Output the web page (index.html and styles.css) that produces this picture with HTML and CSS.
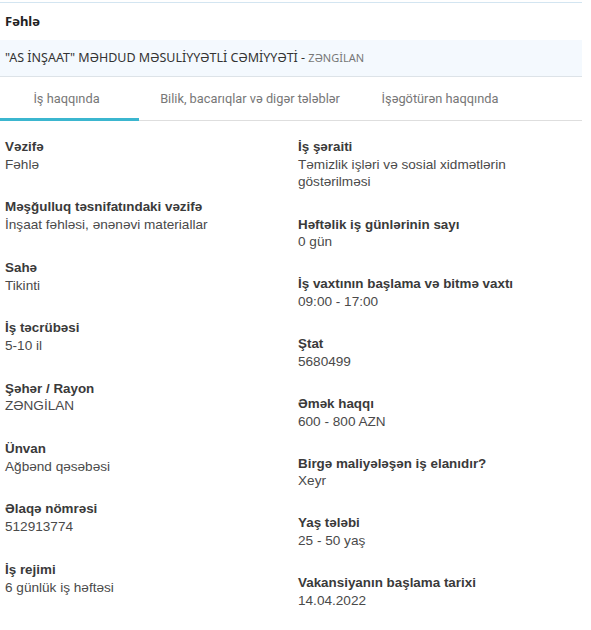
FILE: index.html
```html
<!DOCTYPE html>
<html lang="az">
<head>
    <meta charset="UTF-8">
    <title>Fəhlə</title>
    <link rel="stylesheet" href="styles.css">
</head>
<body>

<div class="vacancy">
    <div class="vacancy-title">Fəhlə</div>
    <div class="company">"AS İNŞAAT" MƏHDUD MƏSULİYYƏTLİ CƏMİYYƏTİ - <span class="company-city">ZƏNGİLAN</span></div>

    <div class="tabs">
        <a class="tab tab-about active">İş haqqında</a>
        <a class="tab tab-skills">Bilik, bacarıqlar və digər tələblər</a>
        <a class="tab tab-employer">İşəgötürən haqqında</a>
    </div>

    <div class="details">
        <div class="column">
            <div class="item">
                <p class="label">Vəzifə</p>
                <p class="value">Fəhlə</p>
            </div>
            <div class="item">
                <p class="label">Məşğulluq təsnifatındaki vəzifə</p>
                <p class="value">İnşaat fəhləsi, ənənəvi materiallar</p>
            </div>
            <div class="item">
                <p class="label">Sahə</p>
                <p class="value">Tikinti</p>
            </div>
            <div class="item">
                <p class="label">İş təcrübəsi</p>
                <p class="value">5-10 il</p>
            </div>
            <div class="item">
                <p class="label">Şəhər / Rayon</p>
                <p class="value">ZƏNGİLAN</p>
            </div>
            <div class="item">
                <p class="label">Ünvan</p>
                <p class="value">Ağbənd qəsəbəsi</p>
            </div>
            <div class="item">
                <p class="label">Əlaqə nömrəsi</p>
                <p class="value">512913774</p>
            </div>
            <div class="item">
                <p class="label">İş rejimi</p>
                <p class="value">6 günlük iş həftəsi</p>
            </div>
        </div>

        <div class="column">
            <div class="item">
                <p class="label">İş şəraiti</p>
                <p class="value">Təmizlik işləri və sosial xidmətlərin göstərilməsi</p>
            </div>
            <div class="item">
                <p class="label">Həftəlik iş günlərinin sayı</p>
                <p class="value">0 gün</p>
            </div>
            <div class="item">
                <p class="label">İş vaxtının başlama və bitmə vaxtı</p>
                <p class="value">09:00 - 17:00</p>
            </div>
            <div class="item">
                <p class="label">Ştat</p>
                <p class="value">5680499</p>
            </div>
            <div class="item">
                <p class="label">Əmək haqqı</p>
                <p class="value">600 - 800 AZN</p>
            </div>
            <div class="item">
                <p class="label">Birgə maliyələşən iş elanıdır?</p>
                <p class="value">Xeyr</p>
            </div>
            <div class="item">
                <p class="label">Yaş tələbi</p>
                <p class="value">25 - 50 yaş</p>
            </div>
            <div class="item">
                <p class="label">Vakansiyanın başlama tarixi</p>
                <p class="value">14.04.2022</p>
            </div>
        </div>
    </div>
</div>

</body>
</html>
```

FILE: styles.css
```css
body {
    font-family: "Liberation Sans", Arial, sans-serif;
    margin: 0;
    padding: 0;
    background-color: white;
}
.vacancy {
    width: 582px;
    margin-top: 2px;
    border-top: 1px solid #d3e5f1;
}
.vacancy-title {
    font-family: "Noto Sans", "Open Sans", sans-serif;
    font-size: 13px;
    font-weight: bold;
    color: #222;
    padding: 0 5px;
    height: 37px;
    line-height: 37px;
}
.company {
    font-family: "Noto Sans", "Open Sans", sans-serif;
    font-size: 12.5px;
    color: #333;
    background-color: #f4f9fe;
    border-bottom: 1px solid #dde3e8;
    padding: 0 5px;
    height: 36px;
    line-height: 36px;
}
.company-city {
    font-size: 11px;
    color: #777;
}
.tabs {
    display: flex;
    border-bottom: 1px solid #dedede;
}
.tab {
    font-family: Roboto, "Liberation Sans", sans-serif;
    font-size: 12.8px;
    color: #777;
    text-align: center;
    height: 41px;
    line-height: 44px;
    border-bottom: 3px solid transparent;
    margin-bottom: -1px;
    cursor: pointer;
}
.tab-about {
    width: 133px;
    padding-right: 6px;
}
.tab-skills {
    width: 222px;
}
.tab-employer {
    width: 158px;
}
.tab.active {
    border-bottom-color: #3bb6cf;
}
.details {
    display: flex;
    padding-top: 17px;
}
.column {
    width: 293px;
    padding: 0 5px;
    box-sizing: border-box;
}
.column + .column {
    width: 289px;
    padding-right: 14px;
}
.item {
    margin-bottom: 25px;
}
.column + .column .item {
    margin-bottom: 24.4px;
}
.label {
    font-size: 13.4px;
    font-weight: bold;
    color: #3a3a3a;
    margin: 0;
    line-height: 17.7px;
}
.value {
    font-size: 13.6px;
    color: #4a4a4a;
    margin: 0;
    line-height: 17.7px;
}
```
